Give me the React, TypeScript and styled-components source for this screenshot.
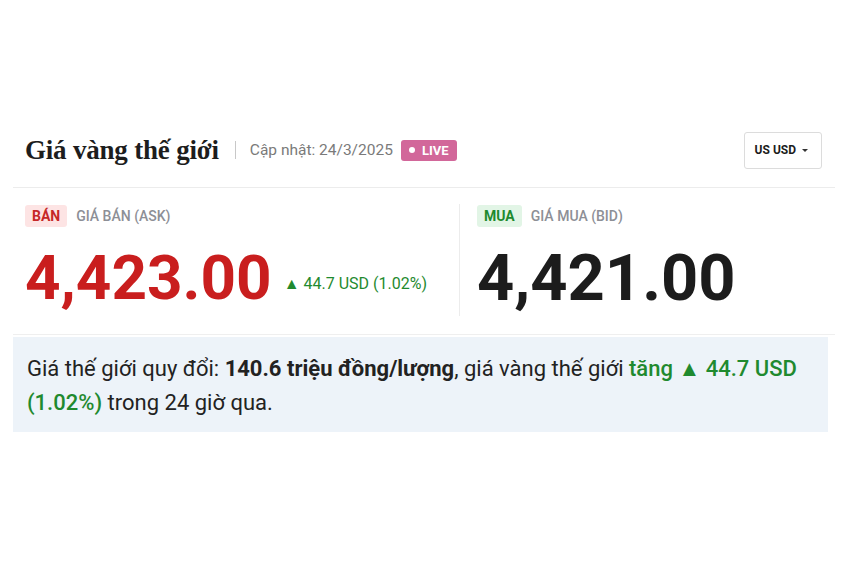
import React from "react";
import styled, { createGlobalStyle } from "styled-components";

const GlobalStyle = createGlobalStyle`
  html, body {
    margin: 0;
    padding: 0;
    background: #ffffff;
  }
  body {
    font-family: Roboto, "Noto Sans", Arial, sans-serif;
    color: #1c1c1c;
  }
`;

const Widget = styled.section`
  width: 822px;
  margin: 131px 0 0 13px;
`;

const Header = styled.header`
  display: flex;
  align-items: center;
  height: 38px;
  padding: 0 13px 18px 12px;
  border-bottom: 1px solid #ececec;
`;

const Title = styled.h2`
  margin: 0;
  font-family: "Liberation Serif", "DejaVu Serif", serif;
  font-size: 27px;
  font-weight: 700;
  color: #1d1d1d;
  letter-spacing: -0.2px;
`;

const Updated = styled.span`
  display: flex;
  align-items: center;
  margin-left: 16px;
  font-size: 15.5px;
  color: #7a7a7a;

  &::before {
    content: "";
    width: 1px;
    height: 18px;
    background: #c8c8c8;
    margin-right: 14px;
  }
`;

const LiveBadge = styled.span`
  display: inline-flex;
  align-items: center;
  gap: 7px;
  margin-left: 8px;
  height: 21px;
  padding: 0 8px;
  border-radius: 3px;
  background: #d2679a;
  color: #fff;
  font-size: 13px;
  font-weight: 700;

  &::before {
    content: "";
    width: 6px;
    height: 6px;
    border-radius: 50%;
    background: #fff;
  }
`;

const CurrencySelect = styled.button`
  margin-left: auto;
  display: flex;
  align-items: center;
  gap: 6px;
  height: 37px;
  padding: 0 13px 0 10px;
  border: 1px solid #dcdcdc;
  border-radius: 3px;
  background: #fff;
  font-family: Roboto, sans-serif;
  font-size: 12px;
  font-weight: 700;
  color: #1c1c1c;

  &::after {
    content: "";
    border-left: 3px solid transparent;
    border-right: 3px solid transparent;
    border-top: 3.5px solid #333;
  }
`;

const Prices = styled.div`
  display: grid;
  grid-template-columns: 447px 1fr;
  height: 146px;
  border-bottom: 1px solid #efefef;
`;

const PriceCol = styled.div<{ $divider?: boolean }>`
  display: flex;
  flex-direction: column;
  margin: 16px 0 20px;
  padding: 1px 0 0 ${(p) => (p.$divider ? "17px" : "12px")};
  border-right: ${(p) => (p.$divider ? "none" : "1px solid #ececec")};
`;

const LabelRow = styled.div`
  display: flex;
  align-items: center;
  gap: 9px;
  font-size: 14px;
  font-weight: 500;
  color: #8d8f96;
`;

const Side = styled.span<{ $tone: "sell" | "buy" }>`
  display: inline-flex;
  align-items: center;
  height: 22px;
  padding: 0 7px;
  border-radius: 3px;
  font-weight: 700;
  font-size: 14px;
  background: ${(p) => (p.$tone === "sell" ? "#fde4e4" : "#e2f5e6")};
  color: ${(p) => (p.$tone === "sell" ? "#c62828" : "#1e8a2e")};
`;

const PriceLine = styled.div`
  display: flex;
  align-items: baseline;
  gap: 12px;
  margin-top: 13px;
`;

const Price = styled.span<{ $tone: "sell" | "buy" }>`
  font-size: ${(p) => (p.$tone === "sell" ? "62px" : "65px")};
  font-weight: 700;
  line-height: 76px;
  color: ${(p) => (p.$tone === "sell" ? "#c91e1e" : "#1c1c1c")};
`;

const Change = styled.span`
  font-size: 16px;
  color: #1f8a2f;
  position: relative;
  top: -10px;
`;

const Info = styled.p`
  width: 787px;
  margin: 2px 0 0;
  padding: 15px 14px 12px 14px;
  background: #edf3f9;
  font-size: 22px;
  line-height: 34px;
  color: #222;
`;

const Strong = styled.b`
  font-weight: 700;
`;

const Up = styled.span`
  color: #1f8a2f;
  font-weight: 500;
`;

export default function App() {
  return (
    <>
      <GlobalStyle />
      <Widget>
        <Header>
          <Title>Giá vàng thế giới</Title>
          <Updated>Cập nhật: 24/3/2025</Updated>
          <LiveBadge>LIVE</LiveBadge>
          <CurrencySelect>US USD</CurrencySelect>
        </Header>
        <Prices>
          <PriceCol>
            <LabelRow>
              <Side $tone="sell">BÁN</Side>
              GIÁ BÁN (ASK)
            </LabelRow>
            <PriceLine>
              <Price $tone="sell">4,423.00</Price>
              <Change>▲ 44.7 USD (1.02%)</Change>
            </PriceLine>
          </PriceCol>
          <PriceCol $divider>
            <LabelRow>
              <Side $tone="buy">MUA</Side>
              GIÁ MUA (BID)
            </LabelRow>
            <PriceLine>
              <Price $tone="buy">4,421.00</Price>
            </PriceLine>
          </PriceCol>
        </Prices>
        <Info>
          Giá thế giới quy đổi: <Strong>140.6 triệu đồng/lượng</Strong>, giá vàng thế giới{" "}
          <Up>tăng ▲ 44.7 USD</Up> <Up>(1.02%)</Up> trong 24 giờ qua.
        </Info>
      </Widget>
    </>
  );
}
